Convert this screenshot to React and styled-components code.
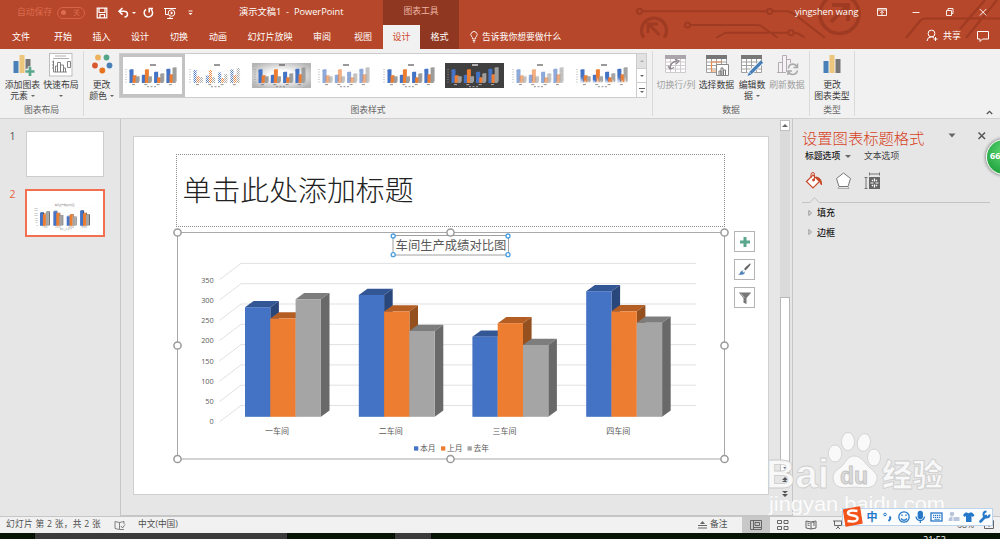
import React from "react";
import styled, { createGlobalStyle } from "styled-components";


const GlobalStyle = createGlobalStyle`
  * {
    box-sizing: border-box;
  }

  body {
    margin: 0;
    overflow: hidden;
    font-family: "Open Sans", "Noto Sans CJK SC", sans-serif;
    font-size: 9px;
    line-height: 11px;
    color: #444444;
  }

  svg {
    display: block;
    flex: none;
  }
`

const Window = styled.div`
  position: relative;
  display: flex;
  flex-direction: column;
  width: 1000px;
  height: 539px;
  overflow: hidden;
  background: #e6e6e6;
  white-space: nowrap;
`

/* ---------- header ---------- */

const Header = styled.header`
  position: relative;
  height: 49px;
  background: #b7472a;
  color: #ffffff;
`

const Circuit = styled.svg`
  position: absolute;
  top: 0;
  right: 0;
`

const HeaderRow = styled.div`
  position: relative;
  display: flex;
  align-items: center;
  height: ${props => props.$height}px;
`

const QuickAccess = styled.div`
  display: flex;
  align-items: center;
  width: 239px;
  height: 25px;
  padding-left: 17px;
`

const AutoSave = styled.span`
  width: 40px;
  font-size: 8.8px;
  color: #dc6c50;
`

const Toggle = styled.div`
  display: flex;
  align-items: center;
  justify-content: space-between;
  width: 28px;
  height: 12px;
  padding: 0 4px 0 3px;
  border: 1px solid #d7634a;
  border-radius: 6px;
  font-size: 7px;
  color: #dc6c50;

  &::before {
    content: "";
    width: 5px;
    height: 5px;
    border-radius: 50%;
    background: #dc6c50;
  }
`

const DocumentTitle = styled.div`
  width: 144px;
  padding-bottom: 3px;
  font-size: 9.25px;
`

const ContextTitle = styled.div`
  width: 76px;
  height: 25px;
  padding-top: 6px;
  background: #8f3721;
  color: #edb5a4;
  font-size: 8.8px;
  text-align: center;
`

const UserName = styled.div`
  width: 82px;
  margin-left: 336px;
  padding-bottom: 3px;
  font-size: 9.2px;
`

const Tab = styled.div`
  width: ${props => props.$width}px;
  height: 24px;
  padding-top: 6px;
  text-align: center;
  font-size: 9px;
  color: ${props => (props.$active ? "#d04526" : "#ffffff")};
  background: ${props => (props.$active ? "#f1f1f1" : props.$context ? "#8f3721" : "transparent")};
`

const TellMe = styled.div`
  display: flex;
  align-items: center;
  gap: 4px;
  width: 467px;
  padding-left: 11px;
  font-size: 8.8px;
`

const Share = styled.div`
  display: flex;
  align-items: center;
  gap: 5px;
  width: 50px;
  margin-top: -3px;
`

/* ---------- ribbon ---------- */

const Ribbon = styled.div`
  position: relative;
  display: flex;
  height: 70px;
  padding-top: 2px;
  background: #f1f1f1;
  border-bottom: 1px solid #d0d0d0;
`

const Group = styled.div`
  display: flex;
  flex-direction: column;
  justify-content: space-between;
  width: ${props => props.$width}px;
  height: 65px;
  border-right: 1px solid #dadada;
`

const GroupBody = styled.div`
  display: flex;
  padding: 2px 0 0 ${props => props.$left || 0}px;
`

const GroupCaption = styled.div`
  text-align: center;
  color: #666666;
  font-size: 8.8px;
`

const BigButton = styled.div`
  display: flex;
  flex-direction: column;
  align-items: center;
  width: ${props => props.$width}px;
  color: ${props => (props.$disabled ? "#a0a0a0" : "#3c3c3c")};
  font-size: 8.9px;
  text-align: center;

  svg {
    margin: 1px 0 3px;
  }
`

const ButtonLine = styled.div`
  display: flex;
  align-items: center;
  justify-content: center;
  gap: 3px;
  height: 11px;
`

const Caret = styled.i`
  border: ${props => props.$size || 2}px solid transparent;
  border-top-color: ${props => props.$color || "#666666"};
  border-bottom: 0;
`

const Gallery = styled.div`
  display: flex;
  width: 528px;
  height: 45px;
  border: 1px solid #cccccc;
  background: #ffffff;
`

const StyleItem = styled.div`
  display: flex;
  align-items: center;
  justify-content: center;
  width: 64.5px;
  height: 43px;
  border: 3px solid ${props => (props.$selected ? "#c3c3c3" : "transparent")};
`

const GalleryScroll = styled.div`
  display: flex;
  flex-direction: column;
  width: 10px;
  border-left: 1px solid #cccccc;
`

const ScrollCell = styled.div`
  display: flex;
  flex-direction: column;
  align-items: center;
  justify-content: center;
  gap: 2px;
  flex: 1;
  border-bottom: 1px solid #cccccc;
  background: ${props => (props.$off ? "#e1e1e1" : "#ffffff")};

  &:last-child {
    border-bottom: 0;
  }
`

const Bar = styled.i`
  width: 6px;
  height: 1px;
  background: #666666;
`

const Collapse = styled.div`
  flex: 1;
  display: flex;
  align-items: flex-end;
  justify-content: flex-end;
  padding: 0 7px 3px 0;
`

/* ---------- work area ---------- */

const Body = styled.main`
  display: flex;
  height: 397px;
`

const Thumbnails = styled.aside`
  width: 121px;
  padding-top: 12px;
  border-right: 1px solid #c6c6c6;
`

const ThumbRow = styled.div`
  display: flex;
  height: 58px;
`

const ThumbNumber = styled.div`
  width: ${props => (props.$active ? 25 : 26)}px;
  padding: 0 0 0 9.5px;
  font-size: 10.5px;
  color: ${props => (props.$active ? "#e8603c" : "#555555")};
`

const Thumb = styled.div`
  width: ${props => (props.$active ? 80 : 78)}px;
  height: ${props => (props.$active ? 48 : 46)}px;
  border: ${props => (props.$active ? "2px solid #f27050" : "1px solid #cdcdcd")};
  background: #ffffff;
`

const Stage = styled.section`
  display: flex;
  width: 672px;
  border-bottom: 1px solid #c6c6c6;
`

const Slide = styled.div`
  width: 636px;
  height: 359px;
  margin: 17px 11px 0 12px;
  padding: 17px 0 0 42px;
  border: 1px solid #cfcfcf;
  background: #ffffff;
`

const TitlePlaceholder = styled.div`
  display: flex;
  align-items: center;
  width: 549px;
  height: 73px;
  padding: 0 0 6px 5.5px;
  border: 1px dotted #8c8c8c;
  font-family: "Noto Sans CJK SC", sans-serif;
  font-size: 28.9px;
  line-height: 40px;
  font-weight: 300;
  color: #222222;
`

const ChartRow = styled.div`
  display: flex;
  gap: 6px;
  padding-top: 1px;
`

const ChartTools = styled.div`
  display: flex;
  flex-direction: column;
  gap: 7px;
  padding-top: 3px;
`

const ChartTool = styled.div`
  display: flex;
  align-items: center;
  justify-content: center;
  width: 21px;
  height: 21px;
  border: 1px solid #b4b4b4;
  background: #ffffff;
`

const ScrollBar = styled.div`
  display: flex;
  flex-direction: column;
  width: 13px;
  padding: 1px 2px 0 0;
  border-right: 1px solid #c6c6c6;
`

const ScrollButton = styled.div`
  display: flex;
  align-items: center;
  justify-content: center;
  height: 11px;
  margin-bottom: ${props => props.$gap || 0}px;
  border: 1px solid ${props => (props.$plain ? "transparent" : "#c0c0c0")};
  background: ${props => (props.$plain ? "transparent" : "#ffffff")};
`

const Track = styled.div`
  height: 166px;
  background: #dadada;
`

const Handle = styled.div`
  height: 165px;
  border: 1px solid #b8b8b8;
  background: #ffffff;
`

const FormatPane = styled.aside`
  width: 207px;
  padding: 10px 10px 0 9px;
`

const PaneHead = styled.div`
  display: flex;
  height: 20px;
`

const PaneTitle = styled.h2`
  width: 147px;
  margin: 0;
  font-size: 15.3px;
  line-height: 18px;
  font-weight: 300;
  color: #d6401c;
`

const PaneOptions = styled.div`
  display: flex;
  align-items: center;
  height: 15px;
  padding-left: 3px;
  font-size: 8.8px;
  color: #444444;

  b {
    width: 40px;
    color: #222222;
    font-weight: 500;
  }
`

const OtherOption = styled.span`
  margin-left: 13px;
`

const PaneIcons = styled.div`
  display: flex;
  gap: 10px;
  padding: 7px 0 0 2px;
`

const Section = styled.div`
  display: flex;
  align-items: center;
  gap: 4px;
  height: 19.5px;
  padding-left: 6px;
  font-weight: 500;
  color: #222222;
`

/* ---------- bottom ---------- */

const StatusBar = styled.footer`
  display: flex;
  align-items: center;
  height: 17px;
  border-top: 1px solid #c6c6c6;
  background: #f1f1f1;
  font-size: 8.7px;
  color: #505050;
`

const StatusText = styled.div`
  width: ${props => props.$width}px;
  padding-left: ${props => props.$left || 0}px;
  padding-bottom: 2px;
  letter-spacing: ${props => props.$spacing || 0}px;
`

const Notes = styled.div`
  display: flex;
  align-items: center;
  gap: 3px;
  width: 44px;
  padding-bottom: 1px;
`

const ViewButton = styled.div`
  display: flex;
  align-items: center;
  justify-content: center;
  width: 27.5px;
  height: 16px;
  background: ${props => (props.$active ? "#c8c8c8" : "transparent")};
`

const ZoomLevel = styled.div`
  display: flex;
  align-items: center;
  gap: 10px;
  margin-left: 105px;
`

const Taskbar = styled.div`
  display: flex;
  height: 6px;
  padding-left: 35px;
  overflow: hidden;
  background: #061305;
  color: #ffffff;
`

const TaskItem = styled.div`
  width: ${props => props.$width}px;
  margin-right: ${props => props.$gap}px;
  background: #3b3b3b;
`

const Clock = styled.div`
  line-height: 14px;
  font-size: 9px;
`

/* ---------- floating over the window ---------- */

const Watermark = styled.svg`
  position: absolute;
  left: 760px;
  top: 425px;
`

const InputBar = styled.div`
  position: absolute;
  left: 842px;
  top: 508px;
  display: flex;
  align-items: center;
  width: 151px;
  height: 18px;
  border: 1px solid #bcd3ec;
  background: #fbfdff;
`

const Ball = styled.div`
  position: absolute;
  left: 986px;
  top: 139px;
  width: 36px;
  height: 36px;
  padding: 10px 0 0 3px;
  border: 1.5px solid #f4f4f4;
  border-radius: 50%;
  background: radial-gradient(circle at 50% 35%, #5fd873, #27a844 70%);
  box-shadow: 0 0 3px 1px #909090;
  color: #ffffff;
  font-size: 9px;
  font-weight: 700;
`

const BLUE = "#4472c4";
const ORANGE = "#ed7d31";
const GRAY = "#a5a5a5";

const series = [
  { name: "本月", x: 414, front: BLUE, top: "#335694", side: "#2a477b" },
  { name: "上月", x: 441, front: ORANGE, top: "#b55e24", side: "#95501f" },
  { name: "去年", x: 467.5, front: GRAY, top: "#7d7d7d", side: "#696969" },
];

const categories = [
  { name: "一车间", x: 245, tops: [307.2, 318.5, 299.2] },
  { name: "二车间", x: 358.8, tops: [295, 311.5, 331] },
  { name: "三车间", x: 472.4, tops: [336.7, 323.2, 345] },
  { name: "四车间", x: 586.2, tops: [291.2, 311.3, 322.8] },
];

const ticks = [350, 300, 250, 200, 150, 100, 50, 0];

const tabs = [
  ["文件", 42], ["开始", 42], ["插入", 35], ["设计", 42], ["切换", 36],
  ["动画", 42], ["幻灯片放映", 62], ["审阅", 42], ["视图", 40],
];

function Bars() {
  const base = 416.8;
  return categories.map(cat => cat.tops.map((top, i) => {
    const x = cat.x + i * 25.3;
    const r = x + 25.3;
    const s = series[i];
    return (
      <g key={cat.name + i}>
        <polygon points={`${x},${top} ${x + 8.6},${top - 6.2} ${r + 8.6},${top - 6.2} ${r},${top}`} fill={s.top} />
        <polygon points={`${r},${top} ${r + 8.6},${top - 6.2} ${r + 8.6},${base - 6.3} ${r},${base}`} fill={s.side} />
        <rect x={x} y={top} width={25.3} height={base - top} fill={s.front} />
      </g>
    );
  }));
}

function Grid() {
  return ticks.map((t, i) => (
    <path key={t} d={`M219.5 ${279.7 + i * 20.3}L241 ${263.4 + i * 20.3}H696`} fill="none" stroke="#e1e1e1" />
  ));
}

function Chart() {
  const knobs = [[177.5, 232.5], [450.5, 232.5], [724.5, 232.5], [177.5, 345.5], [724.5, 345.5], [177.5, 459], [450.5, 459], [724.5, 459]];
  const titleKnobs = [[393.2, 236], [508, 236], [393.2, 254.7], [508, 254.7]];
  return (
    <svg width="557" height="236" viewBox="172 228 557 236" style={{ marginLeft: -4, marginRight: -1 }}>
      <rect x="177.5" y="232.5" width="547" height="226.5" fill="#fff" stroke="#a9a9a9" />
      <Grid />
      <Bars />
      <g fontSize="7.3" fill="#595959" textAnchor="end">
        {ticks.map((t, i) => <text key={t} x="213.7" y={282.8 + i * 20.2}>{t}</text>)}
      </g>
      <g fontSize="8" fill="#595959" textAnchor="middle">
        {categories.map(c => <text key={c.name} x={c.x + 32} y="434">{c.name}</text>)}
      </g>
      {series.map(s => (
        <g key={s.name} fontSize="7.8" fill="#595959">
          <rect x={s.x} y="446.3" width="4.3" height="4.3" fill={s.front} />
          <text x={s.x + 6} y="451.3">{s.name}</text>
        </g>
      ))}
      <rect x="393" y="235.5" width="115.5" height="19.5" fill="#fff" stroke="#a0a0a0" />
      <text x="395.6" y="250" fontSize="12.3" fill="#595959">车间生产成绩对比图</text>
      {titleKnobs.map(([x, y], i) => <circle key={i} cx={x} cy={y} r="2" fill="#fff" stroke="#4a9fe0" strokeWidth="1.3" />)}
      {knobs.map(([x, y], i) => <circle key={i} cx={x} cy={y} r="3.6" fill="#fff" stroke="#999" strokeWidth="1.5" />)}
    </svg>
  );
}

function ThumbChart() {
  return (
    <svg width="76" height="44" viewBox="0 0 76 44">
      <text x="37.5" y="14.5" fontSize="2.2" textAnchor="middle" fill="#777">车间生产成绩对比图</text>
      <g transform="translate(-15.8 -14.2) scale(.1175)">
        <Grid />
        <Bars />
      </g>
      <g fontSize="2" fill="#888" textAnchor="end">
        {ticks.map((t, i) => <text key={t} x="10.7" y={18 + i * 2.4}>{t}</text>)}
      </g>
      <g fontSize="1.9" fill="#888" textAnchor="middle">
        {categories.map((c, i) => <text key={c.name} x={17.5 + i * 13.3} y="37">{c.name}</text>)}
      </g>
      <g fontSize="1.8" fill="#888">
        <text x="33" y="39.4">本月 上月 去年</text>
      </g>
    </svg>
  );
}

// one preview of the chart style gallery
function StylePreview({ kind }) {
  const data = [[13, 7, 6], [7.5, 13, 6], [10.5, 5, 9], [13.5, 8, 15]];
  const dark = kind === "dark";
  const op = kind === "pale" ? 0.6 : 1;
  const fills = kind === "hatch"
    ? ["url(#hatch-b)", "url(#hatch-o)", "url(#hatch-g)"]
    : kind === "fade" ? ["url(#fade-b)", "url(#fade-o)", "url(#fade-g)"] : [BLUE, ORANGE, "#9c9c9c"];
  const ink = dark ? "#cccccc" : "#777777";
  const y0 = 20;
  return (
    <svg width="59" height="25" viewBox="0 0 59 25">
      <defs>
        <radialGradient id="silver" r=".62"><stop offset=".3" stopColor="#fff" /><stop offset="1" stopColor="#b4b4b4" /></radialGradient>
        {[["b", BLUE], ["o", ORANGE], ["g", GRAY]].map(([id, color]) => (
          <React.Fragment key={id}>
            <pattern id={"hatch-" + id} width="2" height="2" patternUnits="userSpaceOnUse">
              <path d="M0 0L2 2" stroke={color} strokeWidth=".9" />
            </pattern>
            <linearGradient id={"fade-" + id} x1="0" y1="0" x2="0" y2="1">
              <stop offset=".5" stopColor={color} /><stop offset="1" stopColor={color} stopOpacity=".1" />
            </linearGradient>
          </React.Fragment>
        ))}
      </defs>
      {dark && <rect width="59" height="25" fill="#404040" />}
      {kind === "silver" && <rect width="59" height="25" fill="url(#silver)" />}
      <path d="M27 2h6" stroke={dark ? "#ffffff" : "#555555"} strokeWidth="1.2" />
      {!dark && kind !== "silver" && <path d="M6 8h48M6 12h48M6 16h48" stroke="#ececec" strokeWidth=".5" />}
      <path d="M3 6v15" stroke={ink} strokeWidth="1" strokeDasharray="1 1.5" opacity=".6" />
      <path d="M24 23.7h10" stroke={ink} strokeWidth=".8" strokeDasharray="2 1.5" />
      {data.map((row, c) => (
        <g key={c}>
          <path d={`M${9 + c * 12.3} 21.6h3`} stroke={ink} strokeWidth=".8" />
          {row.map((h, i) => {
            const x = 6.5 + c * 12.3 + i * 3.1;
            return (
              <g key={i} opacity={op}>
                {kind !== "hatch" && <path d={`M${x} ${y0 - h}l1-.8h3v${h - 1}l-1 1z`} fill={series[i].front} />}
                <rect x={x} y={y0 - h} width="3.1" height={h} fill={fills[i]} />
              </g>
            );
          })}
        </g>
      ))}
    </svg>
  );
}

function CircuitArt() {
  return (
    <Circuit width="370" height="38" viewBox="630 0 370 38" fill="none" stroke="#9f3b22" strokeWidth="2">
      <circle cx="639.5" cy="11.3" r="2.6" />
      <path d="M642 11.3H767M773 11.3h13c4 0 6 1 11 5l28 21.500" />
      <circle cx="769.7" cy="11.3" r="2.6" />
      <circle cx="687.5" cy="25" r="2.6" />
      <path d="M690 25h67q3 0 5 1.500l16 11.500M716 38l7-4q2-1.300 4-1.300h62M794 32.700q4 0 11 5" />
      <circle cx="791" cy="32.700" r="2.600" />
      <path d="M644 38a12.500 12.500 0 1 1 20 0" strokeWidth="3.200" />
      <path d="M659.500 35l-10-10M648 33v-9h10" strokeWidth="3" />
      <circle cx="839.500" cy="14" r="19.500" strokeWidth="3.600" />
      <path d="M831 22l16-16M832 5h16v16" strokeWidth="3.800" />
      <path d="M906 38l14-17q2-2.500 5-2.500h75M960 29L985 0M966 38L997 0" strokeWidth="2.200" />
    </Circuit>
  );
}

function TableIcon({ head = "#777777", line = "#a0a0a0", children }) {
  return (
    <svg width="24" height="22" viewBox="0 0 24 22" fill="none">
      <path d="M1.500 1.500h20v17h-20zM6.500 4.500v14M11.500 4.500v14M16.500 4.500v14M1.500 8h20M1.500 11.500h20M1.500 15h20" stroke={line} fill="#fff" />
      <path d="M1 1h21v4H1z" fill={head} />
      {children}
    </svg>
  );
}

function RibbonView() {
  return (
    <Ribbon>
      <Group $width={84}>
        <GroupBody $left={3}>
          <BigButton $width={39}>
            <svg width="24" height="22" viewBox="0 0 24 22">
              <path d="M2.500 7h5v12h-5z" fill="#4a80b8" /><path d="M8.500 1h5v18h-5z" fill="#ecc67c" /><path d="M14.500 5h5v13h-5z" fill="#777" />
              <path d="M19 12.500v9M14.500 17h9" stroke="#f1f1f1" strokeWidth="4.500" /><path d="M19 13v9M14.500 17.500h9" stroke="#5aa78c" strokeWidth="2.700" />
            </svg>
            <ButtonLine>添加图表</ButtonLine>
            <ButtonLine>元素<Caret /></ButtonLine>
          </BigButton>
          <BigButton $width={38}>
            <svg width="24" height="22" viewBox="0 -1 24 22" fill="none" overflow="visible">
              <rect x=".5" y="-1.500" width="22.500" height="22.500" fill="#fff" stroke="#bdbdbd" />
              <path d="M6 1h11M4 3.500h16" stroke="#999" strokeWidth=".8" />
              <path d="M4.500 5.500v11.500M3 7h1.500M3 10h1.500M3 13h1.500M4.500 17H18M6.500 17v-6h2v6M8.500 17V7.500h3V17M11.500 17v-7h3v7M14.500 17v-4h2v4M18.500 6.500h3v6h-3z" stroke="#777" strokeWidth=".9" />
            </svg>
            <ButtonLine>快速布局</ButtonLine>
            <ButtonLine><Caret /></ButtonLine>
          </BigButton>
        </GroupBody>
        <GroupCaption>图表布局</GroupCaption>
      </Group>

      <Group $width={569}>
        <GroupBody $left={0}>
          <BigButton $width={35}>
            <svg width="24" height="22" viewBox="0 0 24 22">
              <circle cx="8" cy="3.500" r="2.900" fill="#ecb35e" /><circle cx="16.500" cy="3.500" r="2.900" fill="#54a58a" />
              <circle cx="5" cy="11.500" r="2.900" fill="#d9572f" /><circle cx="19.500" cy="11.500" r="2.900" fill="#4a7fb8" />
              <circle cx="12.300" cy="16.500" r="2.900" fill="#e8731c" />
            </svg>
            <ButtonLine>更改</ButtonLine>
            <ButtonLine>颜色<Caret /></ButtonLine>
          </BigButton>
          <Gallery>
            {["plain", "hatch", "silver", "pale", "plain", "dark", "pale", "fade"].map((kind, i) => (
              <StyleItem key={i} $selected={i === 0}><StylePreview kind={kind} /></StyleItem>
            ))}
            <GalleryScroll>
              <ScrollCell $off><svg width="4" height="2"><path d="M0 2l2-2 2 2z" fill="#aaa" /></svg></ScrollCell>
              <ScrollCell><Caret /></ScrollCell>
              <ScrollCell><Bar /><Caret /></ScrollCell>
            </GalleryScroll>
          </Gallery>
        </GroupBody>
        <GroupCaption>图表样式</GroupCaption>
      </Group>

      <Group $width={157}>
        <GroupBody $left={2}>
          <BigButton $width={42} $disabled>
            <TableIcon head="#aaa5aa" line="#cfcace">
              <path d="M6 15q0-7 7-8M11 5l4 2-3 3M4 12l2 3 4-1.500" stroke="#8d858d" strokeWidth="1.300" />
            </TableIcon>
            <ButtonLine>切换行/列</ButtonLine>
          </BigButton>
          <BigButton $width={39}>
            <TableIcon>
              <path d="M17 8H6.500v9H12" stroke="#ee8f50" strokeWidth="1.200" />
              <path d="M11.500 10.500h12v11h-12z" fill="#fff" stroke="#888" /><path d="M14 21v-4h2v4M16 21v-7h2v7M18.500 21v-5h2v5" stroke="#777" />
            </TableIcon>
            <ButtonLine>选择数据</ButtonLine>
          </BigButton>
          <BigButton $width={32}>
            <TableIcon>
              <path d="M9 20L21 8.500" stroke="#fff" strokeWidth="5" /><path d="M10.500 19L22 7.500" stroke="#4a80b8" strokeWidth="3.200" /><path d="M7.500 22l1.500-4 2.500 2.500z" fill="#4a80b8" />
            </TableIcon>
            <ButtonLine>编辑数</ButtonLine>
            <ButtonLine>据<Caret /></ButtonLine>
          </BigButton>
          <BigButton $width={38} $disabled>
            <svg width="24" height="22" viewBox="0 0 24 22" fill="none" stroke="#b3adb3">
              <path d="M2 18.500h9M3.500 18V8.500h4V18M7.500 18V1.500h4V18M11.500 12V5.500h4V9" fill="#f5f2f5" />
              <path d="M13.500 14.500q0-4 4-4.500 3 0 4.500 3M22.500 9.500v4h-4M22.500 16.500q-1 4-5 4-3 0-4-3M13 21v-4h4" stroke="#aaa" strokeWidth="1.500" />
            </svg>
            <ButtonLine>刷新数据</ButtonLine>
          </BigButton>
        </GroupBody>
        <GroupCaption>数据</GroupCaption>
      </Group>

      <Group $width={45}>
        <GroupBody>
          <BigButton $width={44}>
            <svg width="24" height="22" viewBox="0 0 24 22">
              <path d="M3.500 7h5v12h-5z" fill="#4a80b8" /><path d="M9.500 1h5v18h-5z" fill="#ecc67c" /><path d="M15.500 5h5v14h-5z" fill="#777" />
            </svg>
            <ButtonLine>更改</ButtonLine>
            <ButtonLine>图表类型</ButtonLine>
          </BigButton>
        </GroupBody>
        <GroupCaption>类型</GroupCaption>
      </Group>
      <Collapse>
        <svg width="7" height="5" viewBox="0 0 7 5" fill="none"><path d="M.8 4l2.700-2.700L6.200 4" stroke="#555" strokeWidth="1.300" /></svg>
      </Collapse>
    </Ribbon>
  );
}

function HeaderView() {
  return (
    <Header>
      <CircuitArt />
      <HeaderRow $height={25}>
        <QuickAccess>
          <AutoSave>自动保存</AutoSave>
          <Toggle>关</Toggle>
          <svg width="110" height="16" viewBox="85 4.500 110 16" fill="none" stroke="#fff">
            <path d="M97.200 7.700h9.600v9.600h-9.600zM99 8v4h6V8M100 17v-3h4.500v3" strokeWidth="1.200" />
            <path d="M122.500 7.500l-3.500 3.300 3.500 3.300M119.500 10.800h4.500q3.500.2 3.500 3 0 2.500-3 2.700" strokeWidth="1.500" />
            <path d="M132 11.500h4l-2 2z" fill="#fff" stroke="none" />
            <path d="M146 8.800a4.200 4.200 0 1 0 5 .2M153 8h-3.800v4" strokeWidth="1.500" />
            <path d="M164 8h12M165.500 8v6h3M170 16.500v1.500M167 18h6" strokeWidth="1" /><circle cx="171.500" cy="12.500" r="3.300" fill="#b7472a" /><path d="M170.700 10.800l2.500 1.700-2.500 1.700z" fill="#fff" stroke="none" />
            <path d="M188.500 10.500h4" /><path d="M188.500 12.500h4l-2 2z" fill="#fff" stroke="none" />
          </svg>
        </QuickAccess>
        <DocumentTitle>演示文稿1&nbsp; -&nbsp; PowerPoint</DocumentTitle>
        <ContextTitle>图表工具</ContextTitle>
        <UserName>yingshen wang</UserName>
        <svg width="114" height="14" viewBox="877 5 114 14" fill="none" stroke="#fff" strokeWidth=".9">
          <path d="M877.500 7.500h9v7h-9zM877.500 9h9M882 14v-3.500M880.300 12l1.700-1.700 1.700 1.700" />
          <path d="M912.500 11.500h7" />
          <path d="M946.500 9.500h5v5h-5zM948 9.500v-2h5v5h-1.500" />
          <path d="M979.800 8l6.500 6.500M986.300 8l-6.500 6.500" />
        </svg>
      </HeaderRow>
      <HeaderRow $height={24}>
        {tabs.map(([name, width]) => <Tab key={name + width} $width={width}>{name}</Tab>)}
        <Tab $width={37} $active>设计</Tab>
        <Tab $width={39} $context>格式</Tab>
        <TellMe>
          <svg width="8" height="12" viewBox="0 0 8 12" fill="none" stroke="#fff" strokeWidth=".9">
            <path d="M2.700 8q0-1.300-1-2.300a3.100 3.100 0 1 1 4.600 0q-1 1-1 2.300zM2.700 9.500h2.600M3 11h2" />
          </svg>
          告诉我你想要做什么
        </TellMe>
        <Share>
          <svg width="12" height="13" viewBox="0 0 12 13" fill="none" stroke="#fff" strokeWidth="1">
            <circle cx="5.500" cy="4.500" r="3.400" /><path d="M1 12q.3-4 4.500-4.200 1.600 0 2.500.8M9.500 8v4M7.500 10h4" />
          </svg>
          共享
        </Share>
        <svg width="14" height="15" viewBox="0 0 14 15" fill="none" stroke="#fff"><path d="M1.500 1.500h11v7.500h-6l-2.500 2.500V9H1.500z" /></svg>
      </HeaderRow>
    </Header>
  );
}

function FormatPaneView() {
  return (
    <FormatPane>
      <PaneHead>
        <PaneTitle>设置图表标题格式</PaneTitle>
        <svg width="42" height="12" viewBox="-.500 0 42 12"><path d="M0 4.500h7l-3.500 4z" fill="#666" /><path d="M30 3.500l6.500 6.500M36.500 3.500L30 10" stroke="#555" strokeWidth="1.500" /></svg>
      </PaneHead>
      <PaneOptions>
        <b>标题选项</b>
        <Caret $size={3.5} />
        <OtherOption>文本选项</OtherOption>
      </PaneOptions>
      <PaneIcons>
        <svg width="20" height="20" viewBox="0 0 20 20" fill="none" stroke="#c8492b">
          <path d="M2.500 10.500L9 4l6.500 6.500L9 17z" fill="#fff" strokeWidth="1.200" /><path d="M7 7V3.500q0-2 2-2 1.500 0 1.500 2V9" /><circle cx="9.500" cy="9" r="1" fill="#c8492b" /><path d="M12 6q6 .5 5.500 8-2-4-3-5z" fill="#c8492b" />
        </svg>
        <svg width="19" height="20" viewBox="0 0 19 20" fill="none" stroke="#777">
          <path d="M9.500 2L16.500 7.500 14 15.500H5L2.500 7.500z" fill="#fff" /><path d="M5 15.500L4 17.500h11l-1-2" strokeWidth=".8" opacity=".6" />
        </svg>
        <svg width="19" height="20" viewBox="0 0 19 20" fill="none" stroke="#666">
          <path d="M3 6.500v11M1.500 6.500h3M1.500 17.500h3M6.500 3h10M6.500 1.500v3M16.500 1.500v3" strokeWidth=".9" /><path d="M6 6h11v12H6z" fill="#666" stroke="none" />
          <path d="M11.500 7.500v3M11.500 13.500v3M7.500 12h3M12.500 12h3M9 9l1 1M14 9l-1 1M9 15l1-1M14 15l-1-1" stroke="#fff" strokeWidth="1.200" />
        </svg>
      </PaneIcons>
      <svg width="188" height="12" viewBox="0 0 188 12" fill="none"><path d="M0 11.500h8l4.500-5 4.500 5h171" stroke="#c4c4c4" /></svg>
      {["填充", "边框"].map(name => (
        <Section key={name}>
          <svg width="5" height="8" viewBox="0 0 5 8" fill="none"><path d="M.8 1.500L3.600 4 .8 6.500z" stroke="#888" strokeWidth=".8" /></svg>
          {name}
        </Section>
      ))}
    </FormatPane>
  );
}

function WatermarkView() {
  return (
    <Watermark width="195" height="95" viewBox="760 425 195 95" fill="#fafafa" fillOpacity=".93" stroke="#cdcdcd" strokeWidth=".8">
      <text x="766" y="487.500" fontFamily="Liberation Sans" fontSize="41" fontWeight="700" textLength="63" lengthAdjust="spacingAndGlyphs">Bai</text>
      <ellipse cx="835" cy="453.500" rx="6.700" ry="8.500" />
      <ellipse cx="848" cy="441.500" rx="6.500" ry="9" />
      <ellipse cx="864" cy="442.500" rx="6.500" ry="9" transform="rotate(12 864 442)" />
      <ellipse cx="874" cy="457.500" rx="6.500" ry="8.500" />
      <path d="M854 456c7 0 10 6 15 11 7 6 10 9 7 15-3 7-10 6-21 5-10 1-18 2-21-5-3-7 1-11 7-15 5-4 6-11 13-11z" />
      <text x="840" y="484" fontFamily="Liberation Sans" fontSize="23" fontWeight="700" fill="#d6d6d6" stroke="#c4c4c4">du</text>
      <text x="882" y="485.500" fontFamily="Noto Sans CJK SC" fontSize="30.500" fontWeight="900">经验</text>
      <text x="769" y="511" fontFamily="Liberation Sans" fontSize="21" textLength="176" lengthAdjust="spacingAndGlyphs" fill="#ffffff" stroke="#dcdcdc" strokeWidth=".3" paintOrder="stroke">jingyan.baidu.com</text>
    </Watermark>
  );
}

function InputBarView() {
  return (
    <InputBar>
      <svg width="149" height="22" viewBox="843 506 149 22" fill="none" stroke="#2678c8" strokeWidth="1.300">
        <path d="M843.500 510l16-3 2.500 16-16 3z" fill="#f2541b" stroke="#f2541b" strokeLinejoin="round" />
        <path d="M857.500 511q-9-1.500-9.500 2 .3 2 5 2.500 5 .8 4.500 3.500-1 3.500-10 2" stroke="#fff" strokeWidth="2.500" />
        <text x="866.500" y="520.800" fontSize="11" fontWeight="700" fill="#2678c8" stroke="none">中</text>
        <circle cx="885" cy="514.500" r="1.300" strokeWidth="1" /><path d="M889.500 516.500q2 2-1 4.500" strokeWidth="2" />
        <circle cx="904" cy="517" r="5.200" /><path d="M902 514.500v1.500M906 514.500v1.500M901 518.500q3 3.500 6 0" />
        <rect x="918.300" y="511.500" width="4" height="7" rx="2" fill="#2678c8" /><path d="M916 516.500q.5 4 4.300 4 3.700 0 4.200-4M920.300 520v3" />
        <rect x="931" y="513" width="11" height="8" fill="#fff" /><path d="M933 515.300h8M933 517.300h8M934.500 519.300h5" strokeDasharray="1.200 .7" />
        <g fill="#b8c5da" stroke="none"><circle cx="952" cy="514" r="2.300" /><path d="M948.500 521q0-4.500 4-4.500v4.500zM953.500 517h6v4h-6z" /></g>
        <path d="M965.500 512.500l-2.500 2.500 1.500 2 1.500-1v6h5.500v-6l1.500 1 1.500-2-2.500-2.500h-2q-1.500 1.500-3 0z" fill="#2678c8" stroke="none" />
        <path d="M980.500 521.500l5.500-5.500" strokeWidth="2.600" strokeLinecap="round" /><path d="M989.500 514.500a3 3 0 1 1-3-3" strokeWidth="2" />
      </svg>
    </InputBar>
  );
}

function App() {
  return (
    <Window>
      <GlobalStyle />
      <HeaderView />
      <RibbonView />

      <Body>
        <Thumbnails>
          <ThumbRow>
            <ThumbNumber>1</ThumbNumber>
            <Thumb />
          </ThumbRow>
          <ThumbRow>
            <ThumbNumber $active>2</ThumbNumber>
            <Thumb $active><ThumbChart /></Thumb>
          </ThumbRow>
        </Thumbnails>

        <Stage>
          <Slide>
            <TitlePlaceholder>单击此处添加标题</TitlePlaceholder>
            <ChartRow>
              <Chart />
              <ChartTools>
                <ChartTool><svg width="12" height="12"><path d="M6 1v10M1 6h10" stroke="#5aa78c" strokeWidth="3" /></svg></ChartTool>
                <ChartTool>
                  <svg width="15" height="15" viewBox="0 0 15 15"><path d="M13.500 1.500q1 1-5 7l-1.500-1.500q5.500-6 6.500-5.500z" fill="#666" /><path d="M1 12.500q2-.5 2.500-2.500.8-2 3-1.500 2 1.200 1 3-1.500 2-6.500 1z" fill="#4a80b8" /><circle cx="6.500" cy="9.500" r="1" fill="#fff" /></svg>
                </ChartTool>
                <ChartTool><svg width="14" height="14" viewBox="0 0 14 14"><path d="M.7 1.500h12.600L8.500 7v6l-3-1.300V7z" fill="#777" /><path d="M3 2.800l3.500 3.700" stroke="#ccc" strokeWidth=".8" /></svg></ChartTool>
              </ChartTools>
            </ChartRow>
          </Slide>
          <ScrollBar>
            <ScrollButton><svg width="6" height="3"><path d="M0 3l3-3 3 3z" fill="#666" /></svg></ScrollButton>
            <Track />
            <Handle />
            <ScrollButton $gap={1}><Caret $size={2.5} /></ScrollButton>
            <ScrollButton $plain $gap={3}><svg width="6" height="6"><path d="M0 3l3-3 3 3zM0 5l3-2 3 2z" fill="#555" /></svg></ScrollButton>
            <ScrollButton $plain><svg width="6" height="6"><path d="M0 0h6L3 2.500zM0 3h6L3 6z" fill="#555" /></svg></ScrollButton>
          </ScrollBar>
        </Stage>

        <FormatPaneView />
      </Body>

      <StatusBar>
        <StatusText $width={114} $left={6} $spacing={0.28}>幻灯片 第 2 张，共 2 张</StatusText>
        <svg width="12" height="11" viewBox="0 0 12 11" fill="none" stroke="#666" strokeWidth=".8"><path d="M5.500 9.500L1 8.500v-7l4.500 1 4.500-1V4M5.500 2.500v7M7 6l1.500 2L11 4.500M6 9.500h4" /></svg>
        <StatusText $width={572} $left={12}>中文(中国)</StatusText>
        <Notes>
          <svg width="9" height="9" viewBox="0 0 9 9"><path d="M0 5.500h9M0 8h9" stroke="#666" /><path d="M2 4l2.500-3L7 4z" fill="#666" /></svg>
          备注
        </Notes>
        <ViewButton $active><svg width="12" height="10" fill="none" stroke="#666"><path d="M.5.5h11v9H.5zM3.500.5v9M5 2.500h4.500v3H5zM3.500 7.500h8" /></svg></ViewButton>
        <ViewButton><svg width="12" height="10" fill="none" stroke="#666"><path d="M.5.500h4v3h-4zM7 .5h4v3H7zM.5 6.500h4v3h-4zM7 6.500h4v3H7z" /></svg></ViewButton>
        <ViewButton><svg width="12" height="10" fill="none" stroke="#666"><path d="M6 2L1 1v7l5 1 5-1V1zM6 2v7M2.500 3l2 .5M2.500 5l2 .5M7.500 2.500L9 2v4" /></svg></ViewButton>
        <ViewButton><svg width="11" height="10" fill="none" stroke="#666"><path d="M0 1h10M1.500 1v4.500h7V1M5 5.500V8M3 9l2-2 2 2" /></svg></ViewButton>
        <ZoomLevel>
          68%
          <svg width="11" height="10" fill="none" stroke="#666"><path d="M.5.500h9v8h-9zM5 2v5M2.500 4.500h5" /></svg>
        </ZoomLevel>
      </StatusBar>
      <Taskbar>
        <TaskItem $width={252} $gap={108} />
        <TaskItem $width={36} $gap={492} />
        <Clock>21:53</Clock>
      </Taskbar>

      <WatermarkView />
      <InputBarView />
      <Ball>66</Ball>
    </Window>
  );
}

export default App;
